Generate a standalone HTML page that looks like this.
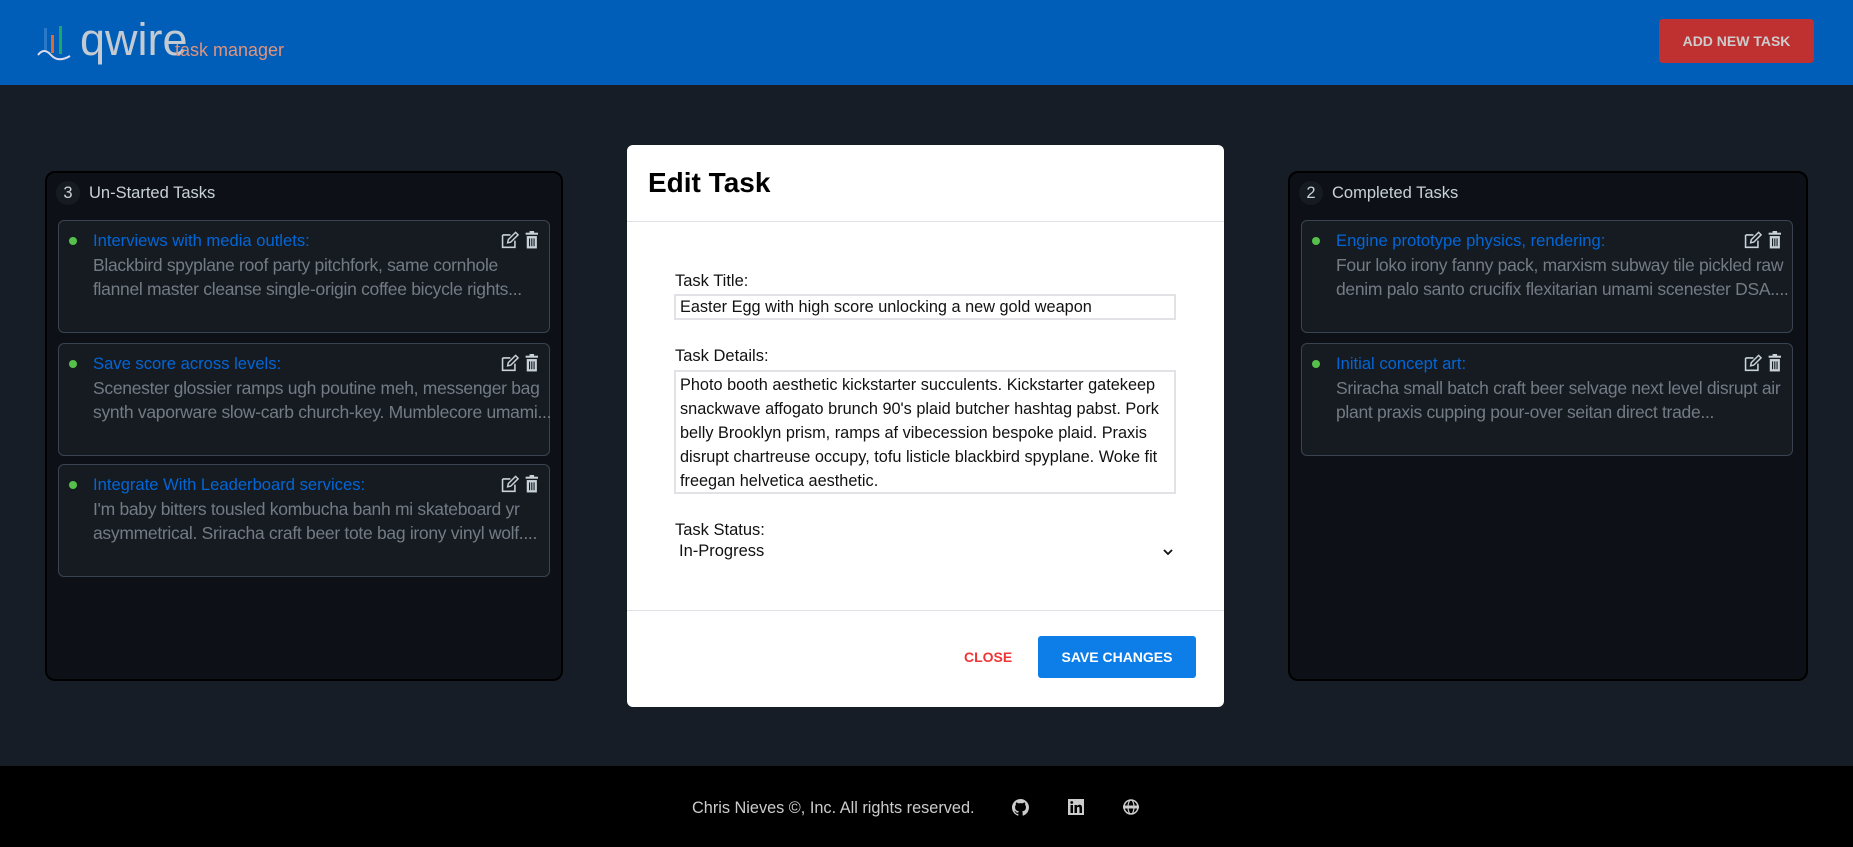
<!DOCTYPE html>
<html><head><meta charset="utf-8"><style>
*{box-sizing:border-box;margin:0;padding:0}
body{width:1853px;height:847px;background:#161d26;font-family:"Liberation Sans",Arial,sans-serif;position:relative;overflow:hidden}
.hdr{position:absolute;left:0;top:0;width:1853px;height:85px;background:#005eb8}
.logo{position:absolute;left:80px;top:14px;font-size:45px;color:#c4cad2;font-weight:300;letter-spacing:0px}
.tm{position:absolute;top:40px;font-size:18px;color:#e0937c}
.add{position:absolute;left:1659px;top:19px;width:155px;height:44px;background:#bf3131;border-radius:4px;color:#ccc;font-weight:bold;font-size:14px;text-align:center;line-height:44px}
.panel{position:absolute;top:171px;width:518px;height:510px;background:#0d1117;border:2px solid #000;border-radius:10px}
.ph{position:absolute;left:9px;top:8px;font-size:16.5px;color:#c9d1d9;line-height:22px}
.badge{display:inline-block;width:24px;height:24px;border-radius:12px;background:#161b22;text-align:center;line-height:24px;margin-right:9px}
.card{position:absolute;left:11px;width:492px;height:113px;border:1px solid #3a4350;border-radius:6px;background:#161b22}
.dot{position:absolute;left:10px;top:16px;width:8px;height:8px;border-radius:4px;background:#56c14a}
.ct{position:absolute;left:34px;top:9px;font-size:16.6px;color:#0366d6;line-height:22px}
.cd{position:absolute;left:34px;top:32px;font-size:17.5px;color:#737b85;line-height:24px;white-space:nowrap;letter-spacing:-0.3px}
.ic{position:absolute;right:9px;top:10px}
.modal{position:absolute;left:627px;top:145px;width:597px;height:562px;background:#fff;border-radius:6px}
.mt{position:absolute;left:21px;top:22px;font-size:28px;font-weight:bold;color:#000}
.hr{position:absolute;left:0;width:597px;height:1px;background:#dee2e6}
.lbl{position:absolute;left:48px;font-size:16.5px;color:#111}
.inp{position:absolute;left:47px;width:502px;border:2px solid #e2e2e6;font-size:16.3px;color:#111;padding:1px 4px;line-height:21px}
.foot{position:absolute;left:0;top:766px;width:1853px;height:81px;background:#000}
</style></head><body>
<div class="hdr">
<svg style="position:absolute;left:37px;top:24px" width="36" height="40" viewBox="0 0 36 40">
<rect x="7" y="4" width="3" height="22" fill="#2a78c8"/><rect x="14" y="11" width="3" height="18" fill="#e06a2a"/><rect x="22" y="2" width="3" height="28" fill="#1aa86a"/>
<path d="M1 31 Q7 23 14 31 T33 32" stroke="#dde" stroke-width="2" fill="none"/></svg>
<div class="logo">qwire</div><div class="tm" style="left:175px">task manager</div>
<div class="add">ADD NEW TASK</div>
</div>

<div class="panel" style="left:45px">
<div class="ph"><span class="badge">3</span>Un-Started Tasks</div>
<div class="card" style="top:47px"><div class="dot"></div><div class="ct">Interviews with media outlets:</div><div class="cd">Blackbird spyplane roof party pitchfork, same cornhole<br>flannel master cleanse single-origin coffee bicycle rights...</div><div class="ic">ICONS</div></div>
<div class="card" style="top:170px"><div class="dot"></div><div class="ct">Save score across levels:</div><div class="cd">Scenester glossier ramps ugh poutine meh, messenger bag<br>synth vaporware slow-carb church-key. Mumblecore umami...</div><div class="ic">ICONS</div></div>
<div class="card" style="top:291px"><div class="dot"></div><div class="ct">Integrate With Leaderboard services:</div><div class="cd">I'm baby bitters tousled kombucha banh mi skateboard yr<br>asymmetrical. Sriracha craft beer tote bag irony vinyl wolf....</div><div class="ic">ICONS</div></div>
</div>

<div class="panel" style="left:1288px;width:520px">
<div class="ph"><span class="badge">2</span>Completed Tasks</div>
<div class="card" style="top:47px;width:492px"><div class="dot"></div><div class="ct">Engine prototype physics, rendering:</div><div class="cd">Four loko irony fanny pack, marxism subway tile pickled raw<br>denim palo santo crucifix flexitarian umami scenester DSA....</div><div class="ic">ICONS</div></div>
<div class="card" style="top:170px;width:492px"><div class="dot"></div><div class="ct">Initial concept art:</div><div class="cd">Sriracha small batch craft beer selvage next level disrupt air<br>plant praxis cupping pour-over seitan direct trade...</div><div class="ic">ICONS</div></div>
</div>

<div class="modal">
<div class="mt">Edit Task</div>
<div class="hr" style="top:76px"></div>
<div class="lbl" style="top:127px">Task Title:</div>
<div class="inp" style="top:149px;height:26px">Easter Egg with high score unlocking a new gold weapon</div>
<div class="lbl" style="top:202px">Task Details:</div>
<div class="inp" style="top:225px;height:124px;line-height:24px">Photo booth aesthetic kickstarter succulents. Kickstarter gatekeep snackwave affogato brunch 90's plaid butcher hashtag pabst. Pork belly Brooklyn prism, ramps af vibecession bespoke plaid. Praxis disrupt chartreuse occupy, tofu listicle blackbird spyplane. Woke fit freegan helvetica aesthetic.</div>
<div class="lbl" style="top:376px">Task Status:</div>
<div class="lbl" style="top:397px;left:52px">In-Progress</div>
<svg style="position:absolute;left:536px;top:403px" width="10" height="8" viewBox="0 0 10 8"><path d="M1 2 L5 6 L9 2" stroke="#111" stroke-width="1.8" fill="none"/></svg>
<div class="hr" style="top:465px"></div>
<div style="position:absolute;left:337px;top:504px;color:#f03535;font-weight:bold;font-size:14px">CLOSE</div>
<div style="position:absolute;left:411px;top:491px;width:158px;height:42px;background:#0d7de8;border-radius:3px;color:#fff;font-weight:bold;font-size:14px;text-align:center;line-height:42px">SAVE CHANGES</div>
</div>

<div class="foot">
<div style="position:absolute;left:692px;top:33px;color:#ccc;font-size:16.3px">Chris Nieves ©, Inc. All rights reserved.</div>
<svg style="position:absolute;left:1012px;top:33px" width="17" height="17" viewBox="0 0 16 16"><path fill="#ccc" d="M8 0C3.58 0 0 3.58 0 8c0 3.54 2.290 6.53 5.470 7.590.4.07.55-.17.55-.38v-1.33c-2.230.48-2.700-1.070-2.700-1.070-.36-.92-.89-1.170-.89-1.170-.73-.5.05-.49.05-.49.8.06 1.230.83 1.230.83.71 1.220 1.870.87 2.330.66.07-.52.28-.87.51-1.070-1.780-.2-3.640-.89-3.640-3.950 0-.87.31-1.590.82-2.150-.08-.2-.36-1.020.08-2.120 0 0 .67-.21 2.200.82.64-.18 1.320-.27 2-.27.68 0 1.360.09 2 .27 1.530-1.040 2.200-.82 2.200-.82.44 1.100.16 1.920.08 2.120.51.56.82 1.270.82 2.150 0 3.070-1.870 3.750-3.650 3.950.29.25.54.73.54 1.480v2.200c0 .21.15.46.55.38A8.013 8.013 0 0016 8c0-4.420-3.580-8-8-8z"/></svg>
<svg style="position:absolute;left:1068px;top:33px" width="16" height="16" viewBox="0 0 16 16"><rect width="16" height="16" fill="#ccc"/><rect x="2.5" y="6" width="2.5" height="8" fill="#000"/><circle cx="3.75" cy="3.5" r="1.4" fill="#000"/><path d="M6.5 6h2.4v1.2c.5-.9 1.5-1.4 2.6-1.4 2 0 2.5 1.3 2.5 3V14h-2.5V9.5c0-1-.3-1.6-1.2-1.6-1 0-1.3.7-1.3 1.6V14H6.5z" fill="#000"/></svg>
<svg style="position:absolute;left:1123px;top:33px" width="16" height="16" viewBox="0 0 16 16"><circle cx="8" cy="8" r="7" fill="none" stroke="#ccc" stroke-width="1.5"/><ellipse cx="8" cy="8" rx="3" ry="7" fill="none" stroke="#ccc" stroke-width="1.2"/><rect x="0" y="6.5" width="16" height="3" fill="#ccc"/></svg>
</div>

<script>
document.querySelectorAll('.ic').forEach(function(e){e.innerHTML='<svg width="40" height="18" viewBox="0 0 34 16"><path d="M1.5 3.5h7M1.5 3.5v11h11v-6" stroke="#c9d1d9" stroke-width="1.4" fill="none"/><path d="M6 10.5l.6-2.8 6.5-6.5 2.2 2.2-6.5 6.5z" stroke="#c9d1d9" stroke-width="1.3" fill="none"/><rect x="22" y="1.5" width="11" height="1.8" fill="#c9d1d9"/><rect x="25.5" y="0" width="4" height="2" fill="#c9d1d9"/><path d="M23 4.5h9v11h-9z" fill="#c9d1d9"/><path d="M25.5 6.5v7M27.5 6.5v7M29.5 6.5v7" stroke="#161b22" stroke-width="1"/></svg>';});
</script>
</body></html>
